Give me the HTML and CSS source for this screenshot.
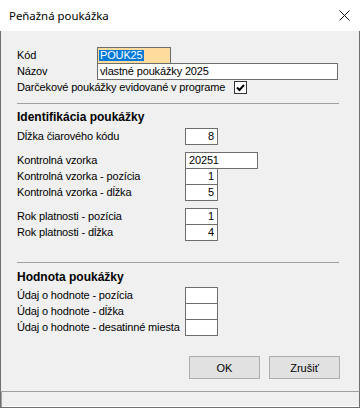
FILE: index.html
```html
<!DOCTYPE html>
<html lang="sk">
<head>
    <meta charset="UTF-8">
    <title>Peňažná poukážka</title>
    <link rel="stylesheet" href="styles.css">
</head>
<body>
    <div class="window">
        <div class="titlebar">
            <span class="title">Peňažná poukážka</span>
            <svg class="close" width="11" height="11" viewBox="0 0 11 11">
                <path d="M0.5 0.5 L10.5 10.5 M10.5 0.5 L0.5 10.5" stroke="#111" stroke-width="1" fill="none"/>
            </svg>
        </div>

        <div class="content">
            <!-- Kód / Názov -->
            <div class="top-row">
                <span class="top-label">Kód</span>
                <div class="field code"><span class="selected">POUK25</span></div>
            </div>
            <div class="top-row">
                <span class="top-label">Názov</span>
                <div class="field name">vlastné poukážky 2025</div>
            </div>
            <div class="top-row">
                <span>Darčekové poukážky evidované v programe</span>
                <span class="checkbox">
                    <svg width="11" height="11" viewBox="0 0 11 11">
                        <path d="M2 5.5 L4.5 8 L9 3" stroke="#000" stroke-width="2" fill="none"/>
                    </svg>
                </span>
            </div>

            <div class="separator first"></div>

            <!-- Identifikácia -->
            <div class="section-title ident">Identifikácia poukážky</div>
            <div class="row">
                <span class="label">Dĺžka čiarového kódu</span>
                <div class="field num">8</div>
            </div>

            <div class="group">
                <div class="row">
                    <span class="label">Kontrolná vzorka</span>
                    <div class="field wide">20251</div>
                </div>
                <div class="row">
                    <span class="label">Kontrolná vzorka - pozícia</span>
                    <div class="field num">1</div>
                </div>
                <div class="row">
                    <span class="label">Kontrolná vzorka - dĺžka</span>
                    <div class="field num">5</div>
                </div>
            </div>

            <div class="group">
                <div class="row">
                    <span class="label">Rok platnosti - pozícia</span>
                    <div class="field num">1</div>
                </div>
                <div class="row">
                    <span class="label">Rok platnosti - dĺžka</span>
                    <div class="field num">4</div>
                </div>
            </div>

            <div class="separator second"></div>

            <!-- Hodnota -->
            <div class="section-title value">Hodnota poukážky</div>
            <div class="row">
                <span class="label">Údaj o hodnote - pozícia</span>
                <div class="field num"></div>
            </div>
            <div class="row">
                <span class="label">Údaj o hodnote - dĺžka</span>
                <div class="field num"></div>
            </div>
            <div class="row">
                <span class="label">Údaj o hodnote - desatinné miesta</span>
                <div class="field num"></div>
            </div>

            <div class="buttons">
                <button class="btn">OK</button>
                <button class="btn">Zrušiť</button>
            </div>
        </div>

        <div class="statusbar"></div>
    </div>
</body>
</html>
```

FILE: styles.css
```css
body {
    margin: 0;
    background-color: #fff;
    font-family: "Liberation Sans", Arial, sans-serif;
    font-size: 11px;
    letter-spacing: -0.15px;
    color: #000;
}

.window {
    width: 360px;
    height: 408px;
    display: flex;
    flex-direction: column;
}

.titlebar {
    height: 31px;
    display: flex;
    align-items: center;
    justify-content: space-between;
    padding: 0 10px 0 9px;
    background-color: #fff;
    box-sizing: border-box;
}

.title {
    font-family: "Noto Sans", "Open Sans", sans-serif;
    font-size: 11.4px;
    letter-spacing: 0;
    margin-top: -1px;
}

.close {
    margin-top: -1px;
}

.content {
    flex: 1;
    background-color: #f0f0f0;
    border-left: 1px solid #6f6f6f;
    border-right: 1px solid #6f6f6f;
    padding: 16px 0 0 16px;
    box-sizing: border-box;
    display: flex;
    flex-direction: column;
}

/* top part */
.top-row {
    height: 16px;
    display: flex;
    align-items: center;
}

.top-label {
    width: 80px;
}

.field {
    height: 17px;
    align-self: flex-start;
    box-sizing: border-box;
    border: 1px solid #6d6d6d;
    background-color: #fff;
    line-height: 15px;
    padding: 0 3px;
    white-space: nowrap;
}

.field.code {
    width: 74px;
    background-color: #fedc9e;
    padding: 1px 0 0 1px;
    line-height: 12px;
}

.selected {
    display: inline-block;
    background-color: #0078d7;
    color: #fff;
    height: 11px;
    line-height: 11px;
    padding: 0 1px;
}

.field.name {
    width: 241px;
    padding-left: 2px;
}

.checkbox {
    width: 13px;
    height: 13px;
    box-sizing: border-box;
    border: 1px solid #333;
    background-color: #fff;
    margin-left: 9px;
    display: flex;
    align-items: center;
    justify-content: center;
}

.separator {
    height: 1px;
    width: 322px;
    background-color: #a0a0a0;
}

.separator.first {
    margin-top: 8px;
}

.separator.second {
    margin-top: 22px;
}

.section-title {
    height: 16px;
    line-height: 16px;
    font-weight: bold;
    font-size: 12px;
    letter-spacing: 0;
}

.section-title.ident {
    margin: 5px 0 3px;
}

.section-title.value {
    margin: 6px 0 2px;
}

/* label + box rows */
.row {
    height: 16px;
    display: flex;
    align-items: center;
}

.label {
    width: 168px;
}

.field.num {
    width: 33px;
    text-align: right;
}

.field.wide {
    width: 73px;
}

.group {
    margin-top: 8px;
}

.buttons {
    display: flex;
    justify-content: flex-end;
    gap: 9px;
    margin-top: 21px;
    padding-right: 19px;
}

.btn {
    width: 71px;
    height: 23px;
    border: 1px solid #adadad;
    background-color: #e1e1e1;
    font-family: "Liberation Sans", Arial, sans-serif;
    font-size: 11px;
    color: #000;
    padding: 0;
}

.statusbar {
    height: 17px;
    box-sizing: border-box;
    background-color: #f0f0f0;
    border-top: 1px solid #a0a0a0;
    border-left: 1px solid #6f6f6f;
    border-right: 1px solid #6f6f6f;
    border-bottom: 1px solid #6f6f6f;
    box-shadow: inset 1px 0 0 #a0a0a0, inset 0 -1px 0 #fff;
}
```
